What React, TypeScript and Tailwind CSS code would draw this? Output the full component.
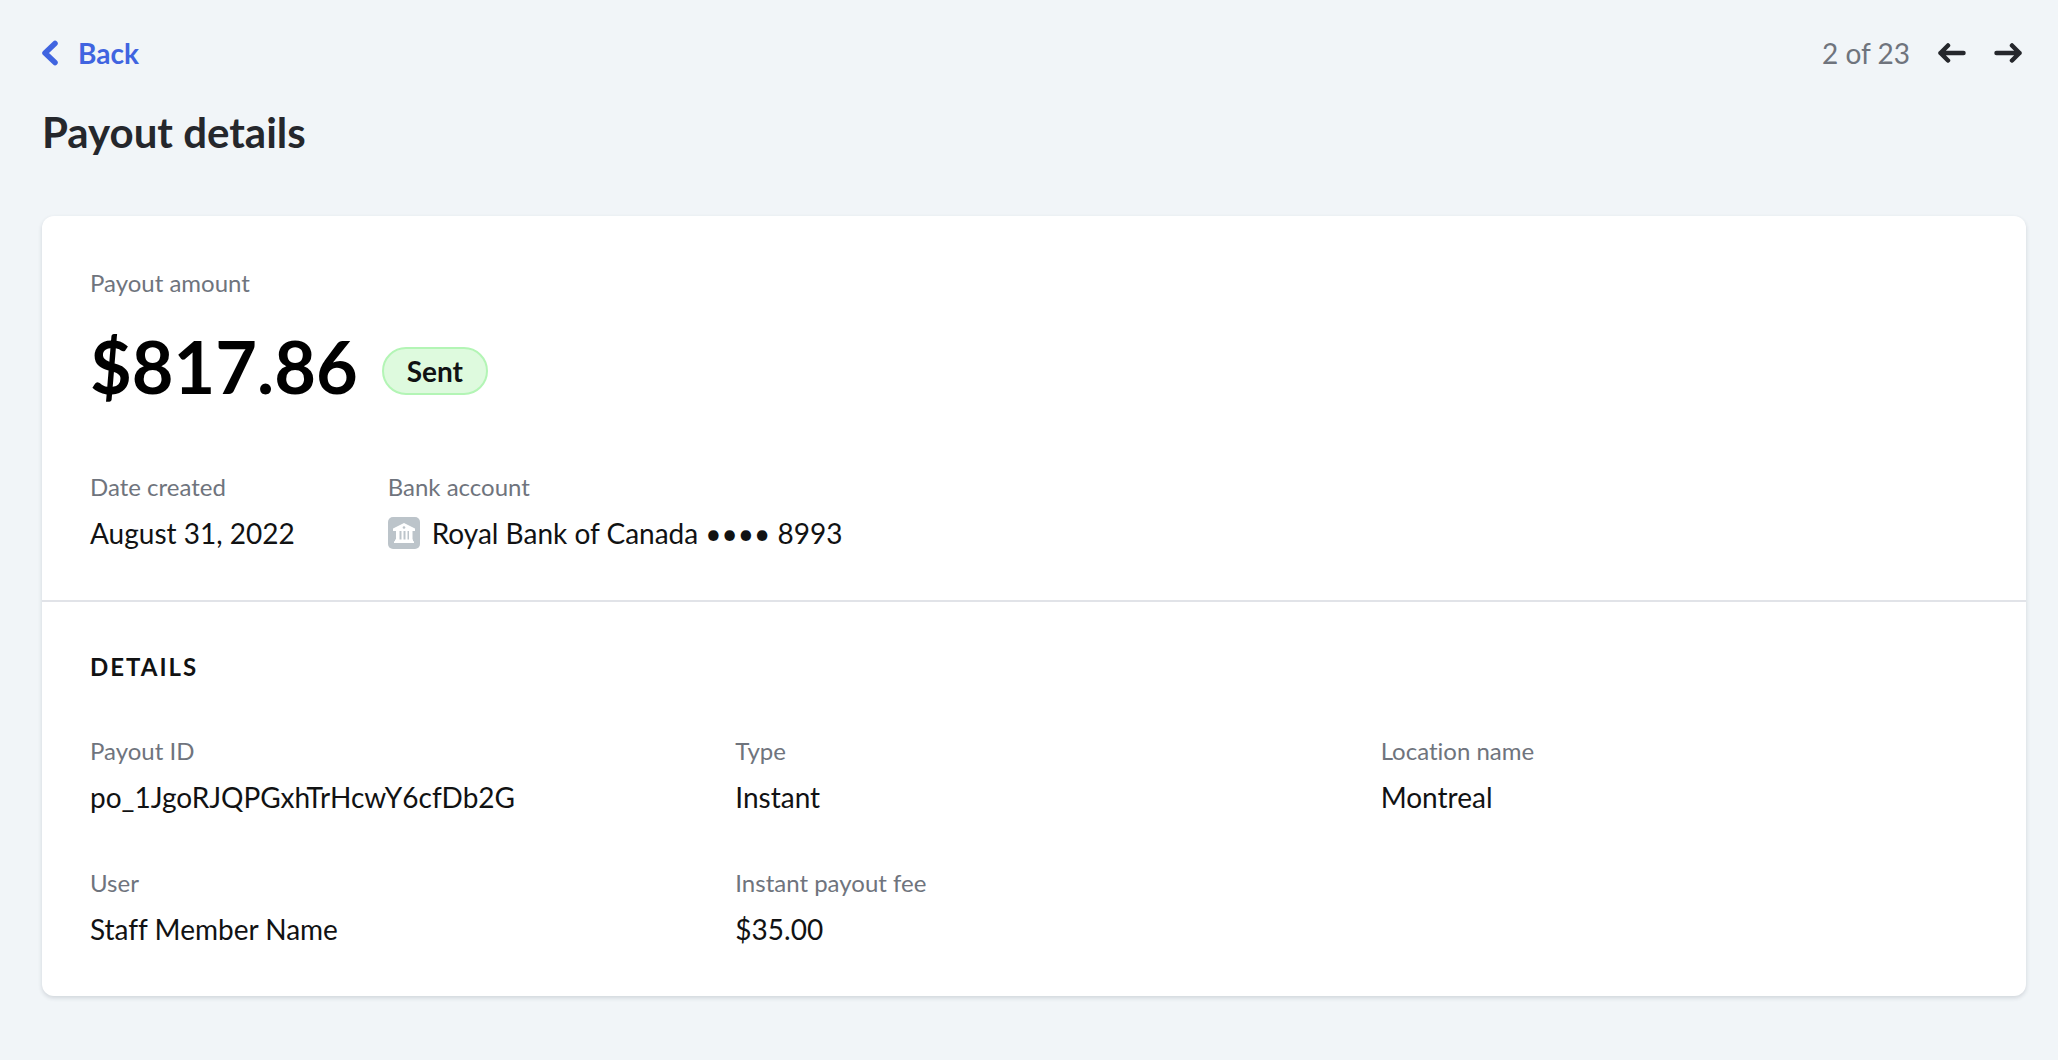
import type { ReactNode } from 'react';

const details = [
  { label: 'Payout ID', value: 'po_1JgoRJQPGxhTrHcwY6cfDb2G' },
  { label: 'Type', value: 'Instant' },
  { label: 'Location name', value: 'Montreal' },
  { label: 'User', value: 'Staff Member Name' },
  { label: 'Instant payout fee', value: '$35.00' },
];

const Field = ({ label, children }: { label: string; children: ReactNode }) => (
  <div className="flex flex-col gap-2">
    <dt className="text-[24px] leading-9 text-[#6f747d]">{label}</dt>
    <dd className="flex items-center gap-3 text-[28px] leading-10 text-[#111213]">{children}</dd>
  </div>
);

const ChevronIcon = () => (
  <svg width="16" height="26" viewBox="0 0 16 26" fill="none" stroke="currentColor" strokeWidth="5.5"
    strokeLinecap="round" strokeLinejoin="round">
    <path d="M13 3.500 3 13l10 9.500" />
  </svg>
);

const ArrowIcon = ({ flip = false }: { flip?: boolean }) => (
  <svg width="28" height="22" viewBox="0 0 28 22" fill="none" stroke="currentColor" strokeWidth="4.5"
    strokeLinecap="round" strokeLinejoin="round" className={flip ? 'rotate-180' : ''}>
    <path d="M2.500 11h23M18 3.500l7.500 7.500-7.500 7.500" />
  </svg>
);

const BankIcon = () => (
  <svg width="32" height="32" viewBox="0 0 32 32">
    <rect width="32" height="32" rx="5" fill="#bcc4ca" />
    <path fill="#fff" d="M16 6 27 11.4V14H5v-2.600zM8 14h3.500v9H8zM13.500 14h2v9h-2zM17.500 14h2v9h-2zM21 14h3.500v9H21zM7 22.500h18v1.700h1V26H6v-1.800h1z" />
    <circle cx="16" cy="10.500" r="1.300" fill="#bcc4ca" />
  </svg>
);

export default function App() {
  return (
    <div className="min-h-screen bg-[#f1f5f8] pt-8 pr-8 pb-16 pl-[42px] font-['Lato',sans-serif] [font-variant-ligatures:none]">
      <header>
        <nav className="flex h-[42px] items-center justify-between">
          <a href="#" className="flex items-center gap-5 text-[28px] font-bold leading-10 text-[#4064e0]">
            <ChevronIcon /> Back
          </a>
          <div className="flex items-center gap-7 pr-1 text-[#25272c]">
            <span className="text-[28px] leading-10 text-[#6f747d]">2 of 23</span>
            <button type="button" aria-label="Previous payout"><ArrowIcon flip /></button>
            <button type="button" aria-label="Next payout"><ArrowIcon /></button>
          </div>
        </nav>
        <h1 className="mt-[30px] text-[42px] font-bold leading-14 text-[#25272c]">Payout details</h1>
      </header>

      <main className="mt-14 rounded-xl bg-white shadow-[0_2px_4px_rgba(40,50,70,0.16)]">
        {/* Summary */}
        <section className="border-b-2 border-[#e1e3e8] px-12 pt-[49px] pb-[47px]">
          <p className="text-[24px] leading-9 text-[#6f747d]">Payout amount</p>
          <div className="mt-6 flex items-center gap-6">
            <strong className="text-[72px] font-bold leading-[82px] text-black">$817.86</strong>
            <span className="mt-[10px] rounded-full border-2 border-[#b3f5b5] bg-[#defade] px-[23px] text-[28px] font-bold leading-11 text-[#111213]">
              Sent
            </span>
          </div>
          <dl className="mt-[62px] flex gap-[93px]">
            <Field label="Date created">August 31, 2022</Field>
            <Field label="Bank account">
              <BankIcon /> Royal Bank of Canada •••• 8993
            </Field>
          </dl>
        </section>

        {/* Details */}
        <section className="px-12 pt-[49px] pb-[47px]">
          <h2 className="text-[24px] font-bold uppercase leading-8 tracking-[2px] text-[#111213]">Details</h2>
          <dl className="mt-[50px] grid grid-cols-3 gap-12">
            {details.map((d) => (
              <Field key={d.label} label={d.label}>{d.value}</Field>
            ))}
          </dl>
        </section>
      </main>
    </div>
  );
}
